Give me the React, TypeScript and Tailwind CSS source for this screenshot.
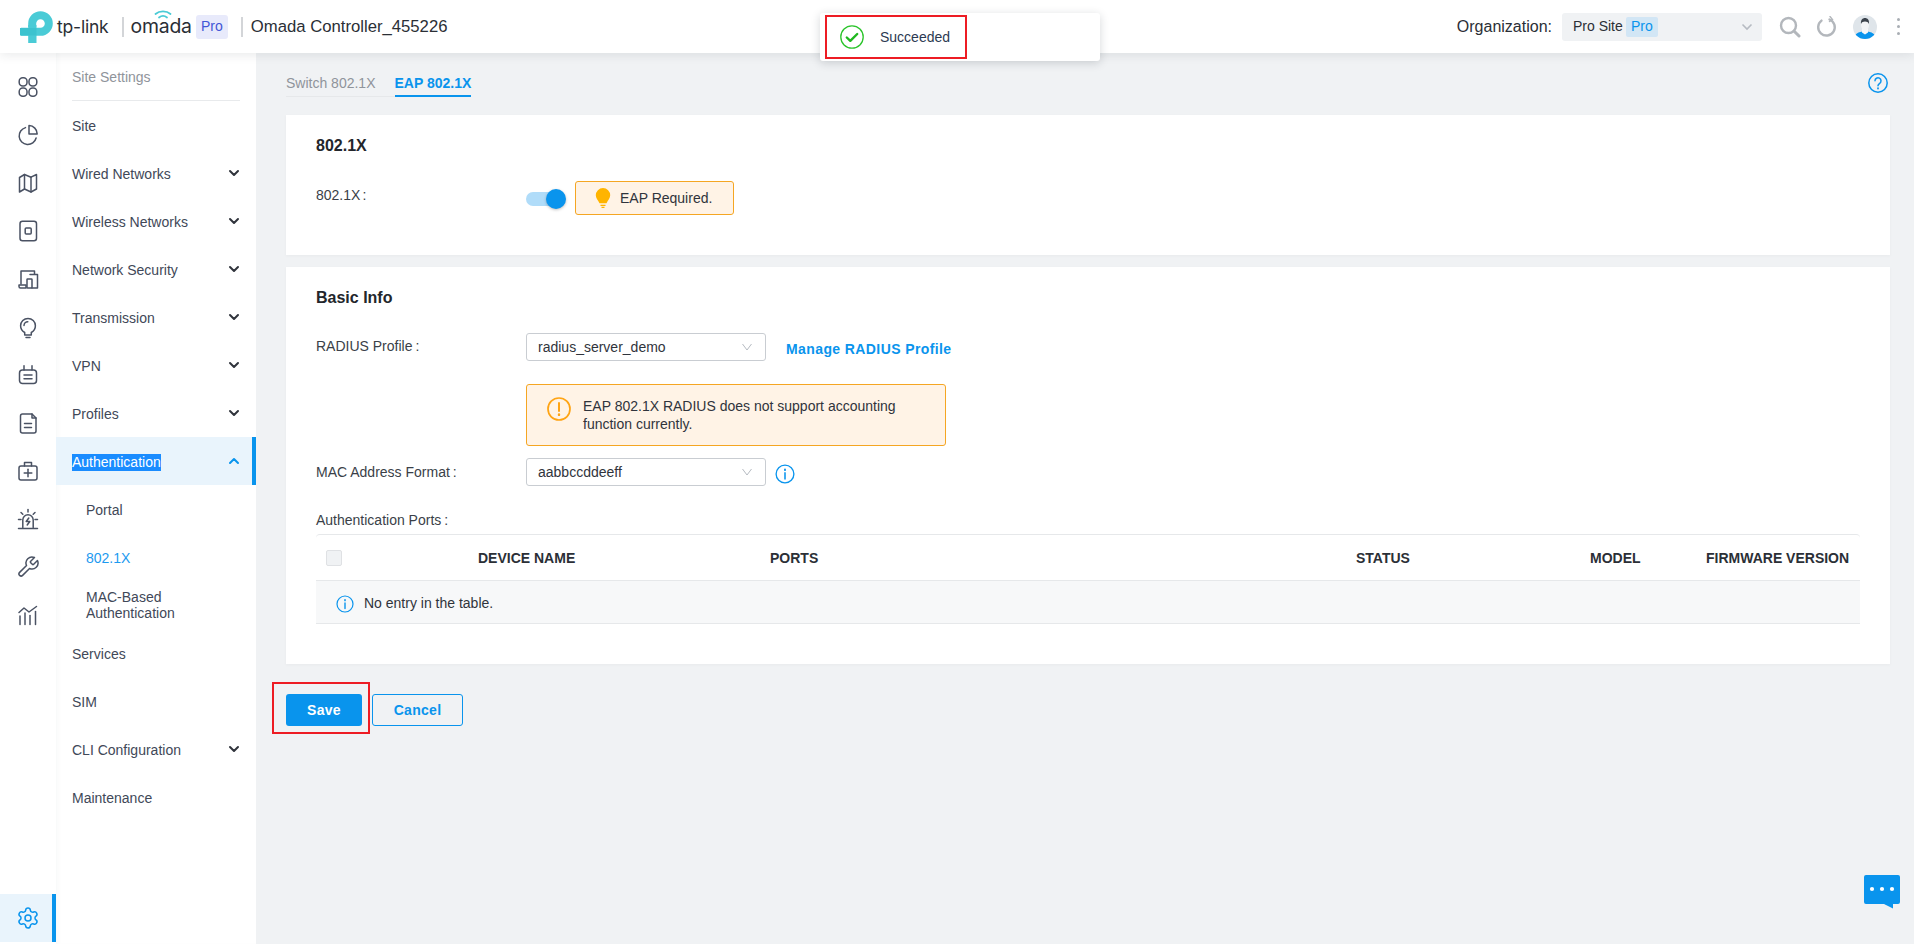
import React from "react";
import { Settings } from "lucide-react";

const S = ({ children, size = 24, color = "#4a5263", w = 1.5 }: { children: React.ReactNode; size?: number; color?: string; w?: number }) => (
  <svg width={size} height={size} viewBox="0 0 24 24" fill="none" stroke={color} strokeWidth={w} strokeLinecap="round" strokeLinejoin="round">
    {children}
  </svg>
);

const railIcons: React.ReactNode[] = [
  <S key="a"><rect x="3.200" y="2.800" width="7.800" height="8.200" rx="3.500" /><rect x="13" y="2.800" width="7.800" height="8.200" rx="3.500" /><rect x="3.200" y="13" width="7.800" height="8.200" rx="3.500" /><rect x="13" y="13" width="7.800" height="8.200" rx="3.500" /></S>,
  <S key="b"><path d="M9.500 4.600a8.600 8.600 0 1 0 10.600 10.400" /><path d="M13 2.600V11h8.200A8.400 8.400 0 0 0 13 2.600z" /></S>,
  <S key="c"><path d="M3.500 6.500 8.500 3.500 15 6.200 20.500 3.500V18l-5.500 3-6.500-3-5 3z" /><path d="M8.500 3.500V18" /><path d="M15 6.200V21" /></S>,
  <S key="d"><rect x="4" y="2.200" width="16.500" height="19.600" rx="2.500" /><rect x="9.200" y="9" width="6" height="6" rx="1" /></S>,
  <S key="e"><path d="M5 17V4h13.500v3" /><path d="M3 18h7v3H4.500A1.500 1.500 0 0 1 3 19.500z" /><path d="M14 7.500h7.500V21H16" /><rect x="11" y="12" width="5" height="9" rx="0.600" /></S>,
  <S key="f"><path d="M8.700 17.500C6.400 16.200 4.600 13.700 4.600 10.800a7.400 7.400 0 0 1 14.800 0c0 2.900-1.800 5.400-4.100 6.700V20H8.700z" /><path d="M10 22.500h4" /><path d="M8 10.500A3.800 3.800 0 0 1 11.800 6.800" /></S>,
  <S key="g"><rect x="3.500" y="7" width="17" height="13.500" rx="3" /><path d="M8 2.800V7" /><path d="M16 2.800V7" /><path d="M8 12h8" /><path d="M8 15.800h8" /></S>,
  <S key="h"><path d="M4.500 5a2 2 0 0 1 2-2H16l4 4v13a2 2 0 0 1-2 2H6.500a2 2 0 0 1-2-2z" /><path d="M16 3v4h4" /><path d="M8.500 12.500h7" /><path d="M8.500 16.500h7" /></S>,
  <S key="i"><rect x="3" y="7" width="18" height="14" rx="2" /><path d="M8.500 7V3.500h7V7" /><path d="M12 10.200v7.500" /><path d="M8.200 14h7.600" /></S>,
  <S key="j"><path d="M2.500 21.500h19" /><path d="M6.800 20.500V13a5.200 5.200 0 0 1 10.400 0v7.500" /><path d="M12.800 11l-2.600 3.500h3.600L11.200 18" /><path d="M12 2.500V5" /><path d="M5 5.500l1.800 1.700" /><path d="M19 5.500l-1.800 1.700" /><path d="M2.500 12.500H5" /><path d="M19 12.500h2.500" /></S>,
  <S key="k"><path d="M14.700 6.300a1 1 0 0 0 0 1.400l1.600 1.600a1 1 0 0 0 1.400 0l3.770-3.770a6 6 0 0 1-7.940 7.940l-6.910 6.910a2.120 2.120 0 0 1-3-3l6.910-6.910a6 6 0 0 1 7.940-7.940l-3.760 3.760z" /></S>,
  <S key="l"><path d="M3 9.500 8 5l5 4 7.500-5.500" /><path d="M4 13v8.500" /><path d="M9 10v11.500" /><path d="M14 12.500v9" /><path d="M19.500 8.500v13" /></S>,
];

const Chevron = ({ up = false }: { up?: boolean }) => (
  <svg width="12" height="8" viewBox="0 0 12 8" fill="none" stroke={up ? "#0994ed" : "#30343c"} strokeWidth="2" strokeLinecap="round" strokeLinejoin="round">
    <path d={up ? "M2 6l4-4 4 4" : "M2 2l4 4 4-4"} />
  </svg>
);

const SelectChevron = () => (
  <svg width="12" height="8" viewBox="0 0 12 8" fill="none" stroke="#b6bbc2" strokeWidth="1">
    <path d="M1.500 1 6 7l4.500-6" />
  </svg>
);

const InfoIcon = ({ size = 18 }: { size?: number }) => (
  <svg width={size} height={size} viewBox="0 0 18 18" fill="none" stroke="#0994ed" strokeWidth="1.200" strokeLinecap="round">
    <circle cx="9" cy="9" r="8" />
    <path d="M9 8v5.500" strokeWidth="1.400" />
    <path d="M9 4.800v0.800" strokeWidth="1.600" />
  </svg>
);

const menu: { t: string; c?: boolean; active?: boolean; sub?: boolean; on?: boolean; two?: boolean }[] = [
  { t: "Site" },
  { t: "Wired Networks", c: true },
  { t: "Wireless Networks", c: true },
  { t: "Network Security", c: true },
  { t: "Transmission", c: true },
  { t: "VPN", c: true },
  { t: "Profiles", c: true },
  { t: "Authentication", c: true, active: true },
  { t: "Portal", sub: true },
  { t: "802.1X", sub: true, on: true },
  { t: "MAC-Based Authentication", sub: true, two: true },
  { t: "Services" },
  { t: "SIM" },
  { t: "CLI Configuration", c: true },
  { t: "Maintenance" },
];

const Field = ({ value }: { value: string }) => (
  <div className="flex h-[28px] w-[240px] items-center justify-between rounded-[3px] border border-[#c9cdd2] bg-white pl-[11px] pr-[12px] text-[14px] text-[#30343c]">
    <span>{value}</span>
    <SelectChevron />
  </div>
);

export default function App() {
  return (
    <div className="relative flex h-[944px] w-full flex-col overflow-hidden bg-[#f0f2f4] text-[14px] font-['Liberation_Sans',Arial,sans-serif] text-[#2b2f36]">
      {/* Header */}
      <header className="relative z-10 flex h-[53px] shrink-0 items-center bg-white pl-[20px] shadow-[0_2px_10px_rgba(40,50,60,0.10)]">
        <svg width="33" height="32" viewBox="0 0 33 32" className="mt-[1px] shrink-0">
          <path d="M12.200 16V12.500a8.300 8.300 0 1 1 8.300 8.300H1" fill="none" stroke="#4acbd6" strokeWidth="8" />
          <rect x="8.200" y="14" width="8.300" height="18" fill="#4acbd6" />
          <rect x="0" y="17" width="16.500" height="7.500" fill="#3cc3cf" />
        </svg>
        <span className="ml-[4px] font-['Inter',sans-serif] text-[17.500px] leading-none tracking-[-0.2px] text-[#2a2e35]">tp-link</span>
        <span className="ml-[13px] h-[20px] w-[2px] bg-[#d3d5d8]" />
        <span className="relative ml-[7px] font-['Inter',sans-serif] text-[19.400px] leading-none tracking-[-0.2px] text-[#2a2e35]">
          omada
          <svg width="18" height="9" viewBox="0 0 18 9" fill="none" stroke="#4acbd6" strokeWidth="1.800" strokeLinecap="round" className="absolute left-[23px] top-[-7px]">
            <path d="M1.500 4C5.500 0.500 12.500 0.500 16.500 4" />
            <path d="M5 7.500c2.500-2 5.500-2 8 0" />
          </svg>
        </span>
        <span className="ml-[4px] flex h-[24px] w-[32px] items-center justify-center rounded-[3px] bg-[#e8eafb] text-[14px] text-[#4257d6]">Pro</span>
        <span className="ml-[13px] h-[20px] w-[2px] bg-[#d3d5d8]" />
        <span className="ml-[8px] text-[16.700px] text-[#2b2f36]">Omada Controller_455226</span>
        <div className="flex-1" />
        <span className="text-[16px] text-[#2b2f36]">Organization:</span>
        <div className="ml-[10px] flex h-[28px] w-[200px] items-center rounded-[3px] bg-[#f0f2f4] pl-[11px] pr-[9px]">
          <span className="text-[14px]">Pro Site</span>
          <span className="ml-[3px] flex h-[20px] w-[32px] items-center justify-center rounded-[2px] bg-[#d2e6f5] text-[14px] text-[#0994ed]">Pro</span>
          <div className="flex-1" />
          <svg width="12" height="8" viewBox="0 0 12 8" fill="none" stroke="#b6bbc2" strokeWidth="1.600"><path d="M1.500 1.500 6 6l4.500-4.500" /></svg>
        </div>
        <svg width="22" height="22" viewBox="0 0 22 22" fill="none" stroke="#b3b7bc" strokeWidth="2.400" strokeLinecap="round" className="ml-[17px] shrink-0">
          <circle cx="9.500" cy="9.500" r="7.500" />
          <path d="M15.200 15.200 20 20" strokeWidth="3" />
        </svg>
        <svg width="22" height="22" viewBox="0 0 22 22" fill="none" stroke="#b3b7bc" strokeWidth="2.400" strokeLinecap="round" className="ml-[15px] shrink-0">
          <path d="M13.500 3.500A8.300 8.300 0 1 1 5.500 4.600" />
          <path d="M14 0.500l2.500 3-3 2" strokeWidth="1.400" />
        </svg>
        <svg width="24" height="24" viewBox="0 0 24 24" className="ml-[15px] shrink-0">
          <defs>
            <clipPath id="av"><circle cx="12" cy="12" r="12" /></clipPath>
          </defs>
          <g clipPath="url(#av)">
            <rect width="24" height="24" fill="#dfe5ea" />
            <path d="M1 24c0-5 4-7.500 11-7.500S23 19 23 24z" fill="#0994ed" />
            <path d="M9 14h6v3.500l-3 2-3-2z" fill="#f5f7f9" />
            <ellipse cx="12" cy="10" rx="4" ry="5.500" fill="#f2f4f6" />
            <path d="M8 9c-.5-4 1.500-6 4-6s4.500 2 4 6c-.8-1.800-2-2.500-4-2.500S8.800 7.200 8 9z" fill="#3b434c" />
          </g>
        </svg>
        <div className="ml-[20px] mr-[14px] flex flex-col gap-[4px]">
          <span className="h-[3px] w-[3px] rounded-full bg-[#a9aeb4]" />
          <span className="h-[3px] w-[3px] rounded-full bg-[#a9aeb4]" />
          <span className="h-[3px] w-[3px] rounded-full bg-[#a9aeb4]" />
        </div>
      </header>

      <div className="flex min-h-0 flex-1">
        {/* Icon rail */}
        <nav className="z-[1] flex w-[56px] shrink-0 flex-col bg-white pb-[2px] pt-[10px]">
          {railIcons.map((ic, i) => (
            <div key={i} className="flex h-[48px] items-center justify-center">{ic}</div>
          ))}
          <div className="flex-1" />
          <div className="flex h-[48px] items-center justify-center border-r-[4px] border-[#0994ed] bg-[#e9f4fc] pl-[4px]">
            <Settings size={24} color="#0994ed" strokeWidth={1.500} />
          </div>
        </nav>

        {/* Sidebar */}
        <aside className="flex w-[200px] shrink-0 flex-col bg-white shadow-[inset_4px_0_4px_-2px_rgba(40,50,60,0.03)]">
          <div className="mx-[16px] h-[48px] border-b border-[#e8eaec] pt-[14px] leading-[20px] text-[#8f949b]">Site Settings</div>
          {menu.map((m) => (
            <div
              key={m.t}
              className={
                "flex h-[48px] items-center justify-between " +
                (m.sub ? "pl-[30px] " : "pl-[16px] ") +
                (m.active ? "border-r-[4px] border-[#0994ed] bg-[#e9f4fc] pr-[12px] " : "pr-[16px] ")
              }
            >
              {m.active ? (
                <span className="mt-[2px] bg-[#1a8cff] leading-[17px] text-white">{m.t}</span>
              ) : (
                <span className={(m.two ? "leading-[16px] " : "mt-[2px] ") + (m.on ? "text-[#1c9af0]" : "text-[#414858]")}>{m.t}</span>
              )}
              {m.c && <Chevron up={m.active} />}
            </div>
          ))}
        </aside>

        {/* Main */}
        <main className="min-w-0 flex-1 pl-[30px] pr-[24px]">
          <div className="mt-[18px] flex h-[26px] items-start justify-between">
            <div className="flex h-[26px]">
              <div className="h-[26px] w-[108.500px] border-b border-[#e6e8ea] pt-[2px] leading-[20px] text-[#8f949b]">Switch 802.1X</div>
              <div className="h-[26px] border-b-[2px] border-[#0994ed] pt-[2px] font-bold leading-[20px] text-[#0994ed]">EAP 802.1X</div>
            </div>
            <svg width="20" height="20" viewBox="0 0 20 20" fill="none" stroke="#0994ed" strokeWidth="1.500" strokeLinecap="round" className="mr-[2px] mt-[2px]">
              <circle cx="10" cy="10" r="9.200" />
              <path d="M7 7.800a3 3 0 1 1 4.700 2.500c-1 .7-1.700 1.200-1.700 2.400" />
              <path d="M10 15.200v.3" strokeWidth="1.800" />
            </svg>
          </div>

          {/* Card 1 */}
          <section className="mt-[18px] h-[140px] bg-white px-[30px] pt-[21px] shadow-[0_1px_3px_rgba(40,50,60,0.04)]">
            <h2 className="text-[16px] font-bold leading-[20px] text-[#23262b]">802.1X</h2>
            <div className="mt-[25px] flex">
              <div className="mt-[4px] w-[210px] leading-[20px] text-[#3a3f48]">802.1X<span className="ml-[2px]">:</span></div>
              <div className="relative mt-[11px] h-[14px] w-[37px] rounded-full bg-[#b0dcf9]">
                <span className="absolute right-[-3px] top-[-3px] h-[20px] w-[20px] rounded-full bg-[#0994ed] shadow-[0_1px_3px_rgba(0,0,0,0.25)]" />
              </div>
              <div className="ml-[12px] flex h-[34px] w-[159px] items-center rounded-[3px] border border-[#f5a623] bg-[#fff3e6] pl-[19px]">
                <svg width="16" height="20" viewBox="0 0 16 20">
                  <path d="M8 0a7.200 7.200 0 0 1 7.200 7.300c0 3-2.200 4.700-3.700 8H4.500C3 12 .8 10.300.8 7.300A7.200 7.200 0 0 1 8 0z" fill="#ffb400" />
                  <path d="M5.500 17.300h5M6.500 19.300h3" stroke="#ffb400" strokeWidth="1.300" />
                </svg>
                <span className="ml-[9px] text-[#30343c]">EAP Required.</span>
              </div>
            </div>
          </section>

          {/* Card 2 */}
          <section className="mt-[12px] h-[397px] bg-white px-[30px] pt-[21px] shadow-[0_1px_3px_rgba(40,50,60,0.04)]">
            <h2 className="text-[16px] font-bold leading-[20px] text-[#23262b]">Basic Info</h2>
            <div className="mt-[25px] flex">
              <div className="mt-[3px] w-[210px] leading-[20px] text-[#3a3f48]">RADIUS Profile<span className="ml-[3px]">:</span></div>
              <Field value="radius_server_demo" />
              <a className="ml-[20px] mt-[6px] font-bold leading-[20px] tracking-[0.4px] text-[#0994ed]">Manage RADIUS Profile</a>
            </div>
            <div className="ml-[210px] mt-[23px] flex h-[62px] w-[420px] rounded-[3px] border border-[#f5a623] bg-[#fff3e6] pl-[20px] pr-[20px] pt-[12px]">
              <svg width="24" height="24" viewBox="0 0 24 24" fill="none" stroke="#ffa414" strokeWidth="1.700" strokeLinecap="round" className="shrink-0">
                <circle cx="12" cy="12" r="11" />
                <path d="M12 6v8" strokeWidth="2" />
                <path d="M12 17.500v.4" strokeWidth="2.400" />
              </svg>
              <p className="ml-[12px] leading-[18px] text-[#30343c]">EAP 802.1X RADIUS does not support accounting function currently.</p>
            </div>
            <div className="mt-[12px] flex">
              <div className="mt-[4px] w-[210px] leading-[20px] text-[#3a3f48]">MAC Address Format<span className="ml-[3px]">:</span></div>
              <Field value="aabbccddeeff" />
              <span className="ml-[9px] mt-[6px]"><InfoIcon size={20} /></span>
            </div>
            <div className="mt-[24px] leading-[20px] text-[#3a3f48]">Authentication Ports<span className="ml-[3px]">:</span></div>
            <div className="mt-[4px] rounded-t-[4px] border-t border-[#e6e8ea]">
              <div className="grid h-[46px] grid-cols-[162px_292px_586px_234px_116px_154px] items-center border-b border-[#e6e8ea] pt-[1px] font-bold text-[#2b2f36]">
                <span className="ml-[10px] h-[16px] w-[16px] rounded-[2px] border border-[#dfe1e4] bg-[#f0f2f4]" />
                <span>DEVICE NAME</span>
                <span>PORTS</span>
                <span>STATUS</span>
                <span>MODEL</span>
                <span>FIRMWARE VERSION</span>
              </div>
              <div className="flex h-[43px] items-center border-b border-[#e6e8ea] bg-[#f7f8f9] pl-[20px] pt-[3px]">
                <InfoIcon />
                <span className="ml-[10px] text-[#30343c]">No entry in the table.</span>
              </div>
            </div>
          </section>

          {/* Buttons */}
          <div className="mt-[30px] flex">
            <button className="h-[32px] w-[76px] rounded-[3px] bg-[#0994ed] font-bold tracking-[0.3px] text-white">Save</button>
            <button className="ml-[10px] h-[32px] w-[91px] rounded-[3px] border border-[#0994ed] bg-transparent font-bold tracking-[0.3px] text-[#0994ed]">Cancel</button>
          </div>
        </main>
      </div>

      {/* Toast */}
      <div className="absolute left-[820px] top-[13px] z-20 flex h-[48px] w-[280px] items-center rounded-[3px] bg-white pl-[20px] shadow-[0_2px_10px_rgba(30,40,50,0.18)]">
        <svg width="24" height="24" viewBox="0 0 24 24" fill="none" className="shrink-0">
          <circle cx="12" cy="12" r="11.200" stroke="#2bc42b" strokeWidth="1.300" />
          <path d="M6.800 12.500l3.500 3.300 6.900-6.800" stroke="#1fb81f" strokeWidth="2.400" strokeLinecap="round" strokeLinejoin="round" />
        </svg>
        <span className="ml-[16px] text-[#2c3a52]">Succeeded</span>
      </div>

      {/* Annotations */}
      <div className="absolute left-[825px] top-[15px] z-30 h-[44px] w-[142px] border-2 border-[#ed1c24]" />
      <div className="absolute left-[272px] top-[682px] z-30 h-[52px] w-[98px] border-2 border-[#ed1c24]" />

      {/* Chat bubble */}
      <svg width="36" height="34" viewBox="0 0 36 34" className="absolute left-[1864px] top-[875px] z-20">
        <path d="M2 0h32a2 2 0 0 1 2 2v25a2 2 0 0 1-2 2h-5v4.500L20 29H2a2 2 0 0 1-2-2V2a2 2 0 0 1 2-2z" fill="#0994ed" />
        <circle cx="8" cy="14" r="2.100" fill="#fff" />
        <circle cx="18" cy="14" r="2.100" fill="#fff" />
        <circle cx="28" cy="14" r="2.100" fill="#fff" />
      </svg>
    </div>
  );
}
